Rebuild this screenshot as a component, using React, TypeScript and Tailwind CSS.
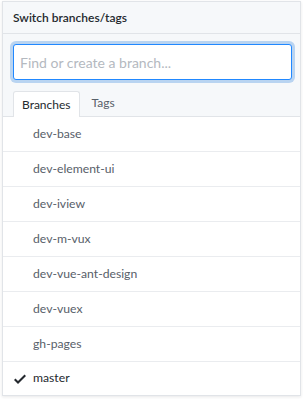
import React from "react";

const branches = [
  "dev-base",
  "dev-element-ui",
  "dev-iview",
  "dev-m-vux",
  "dev-vue-ant-design",
  "dev-vuex",
  "gh-pages",
  "master",
];

export default function App() {
  return (
    <div className="w-[303px] h-[399px] bg-white pt-[1px] pl-[2px] font-['Lato','Noto_Sans',sans-serif]">
      <div className="w-[299px] border border-[#e1e4e8] bg-white shadow-[0_1px_3px_rgba(27,31,35,0.1)]">
        <div className="h-[32px] bg-[#f6f8fa] border-b border-[#e1e4e8] pl-[10px] flex items-center">
          <span className="text-[12px] font-semibold text-[#24292e] leading-none">
            Switch branches/tags
          </span>
        </div>
        <div className="bg-[#f6f8fa] border-b border-[#e1e4e8]">
          <div className="pt-[10px] pl-[10px] pr-[8px] pb-[10px]">
            <div className="h-[36px] border border-[#2188ff] rounded-[3px] bg-white shadow-[0_0_0_3px_rgba(3,102,214,0.25)] flex items-center px-[6px]">
              <span className="text-[14px] text-[#b4b9bf]">Find or create a branch...</span>
            </div>
          </div>
          <div className="flex pl-[10px] h-[26px] items-end">
            <div className="h-[26px] px-[8px] border border-b-0 border-[#e1e4e8] rounded-t-[3px] bg-white mb-[-1px] flex items-center text-[12px] text-[#24292e]">
              Branches
            </div>
            <div className="h-[26px] px-[12px] flex items-center text-[12px] text-[#586069]">
              Tags
            </div>
          </div>
        </div>
        <div>
          {branches.map((b, i) => {
            const last = i === branches.length - 1;
            return (
              <div
                key={b}
                className={`flex items-center ${last ? "h-[33px]" : "h-[35px] border-b border-[#eaecef]"}`}
              >
                <div className="w-[30px] flex justify-end pr-[7px]">
                  {last && (
                    <svg width="12" height="16" viewBox="0 0 12 16" fill="#24292e">
                      <path d="M12 5l-8 8-4-4 1.5-1.5L4 10l6.5-6.5L12 5z" />
                    </svg>
                  )}
                </div>
                <span className={`text-[12.2px] ${last ? "text-[#24292e]" : "text-[#586069]"}`}>{b}</span>
              </div>
            );
          })}
        </div>
      </div>
    </div>
  );
}
